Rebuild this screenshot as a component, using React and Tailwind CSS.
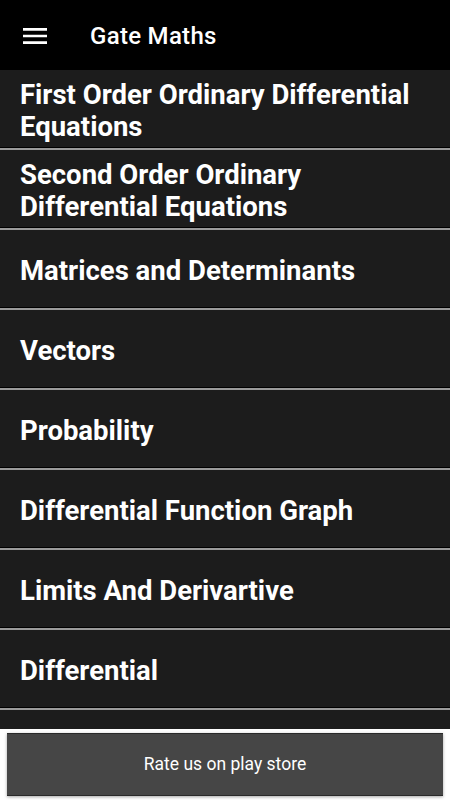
import React from "react";

const items = [
  "First Order Ordinary Differential Equations",
  "Second Order Ordinary Differential Equations",
  "Matrices and Determinants",
  "Vectors",
  "Probability",
  "Differential Function Graph",
  "Limits And Derivartive",
  "Differential",
  "",
];

export default function App() {
  return (
    <div
      className="w-[450px] h-[800px] bg-white flex flex-col overflow-hidden"
      style={{ fontFamily: "Roboto, 'Noto Sans', sans-serif" }}
    >
      <header className="h-[70px] shrink-0 bg-black flex items-center pt-[2px]">
        <div className="w-[90px] flex items-center pl-[19px]">
          <svg width="32" height="32" viewBox="0 0 24 24" fill="#ffffff">
            <path d="M3 18h18v-2H3v2zm0-5h18v-2H3v2zm0-7v2h18V6H3z" />
          </svg>
        </div>
        <span className="text-white text-[24px] tracking-[0.3px] font-medium leading-none">
          Gate Maths
        </span>
      </header>
      <div className="h-[659px] shrink-0 bg-[#1c1c1c] overflow-hidden">
        {items.map((t, i) => (
          <div
            key={i}
            className="h-[80px] flex items-center pl-5 pr-4 pt-1 border-b-2 border-[#9a9a9a] shadow-[inset_0_-1px_0_#000]"
          >
            {t && (
              <span className="text-white font-bold text-[27.5px] leading-[32px]">{t}</span>
            )}
          </div>
        ))}
      </div>
      <div className="flex-1 bg-white px-[7px] pt-[4px]">
        <div className="h-[63px] bg-[#464646] border-y border-[#2a2a2a] shadow-[0_1px_3px_rgba(0,0,0,0.35)] flex items-center justify-center">
          <span className="text-white text-[17.5px]">Rate us on play store</span>
        </div>
      </div>
    </div>
  );
}
